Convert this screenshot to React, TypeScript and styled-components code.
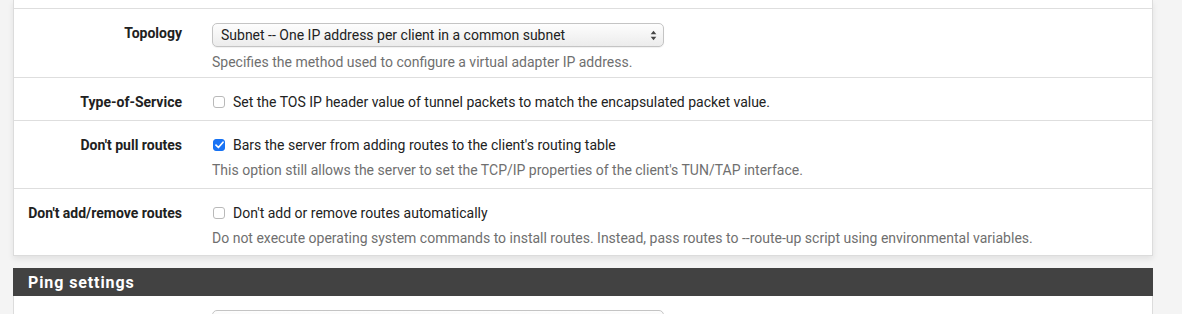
import React from "react";
import styled, { createGlobalStyle } from "styled-components";

const Global = createGlobalStyle`
  html, body { margin: 0; padding: 0; background: #f4f4f4; }
  body { font-family: Roboto, "Liberation Sans", Arial, sans-serif; color: #212121; -webkit-font-smoothing: antialiased; }
`;

const Page = styled.div`
  width: 1182px;
  height: 314px;
  overflow: hidden;
  padding: 0 29px 0 13px;
  box-sizing: border-box;
  display: flex;
  flex-direction: column;
  & > * { flex: none; }
`;

const Panel = styled.div`
  background: #fff;
  border: 1px solid #dcdcdc;
  border-top: none;
  box-shadow: 0 3px 6px rgba(0, 0, 0, 0.08);
`;

const Row = styled.div<{ $h: number; $first?: boolean }>`
  display: flex;
  box-sizing: border-box;
  height: ${(p) => p.$h}px;
  border-top: ${(p) => (p.$first ? "none" : "1px solid #dedede")};
  padding-top: ${(p) => (p.$first ? 0 : 14)}px;
`;

const Label = styled.div`
  width: 168px;
  flex: none;
  text-align: right;
  font-weight: 700;
  font-size: 14px;
  line-height: 20px;
  color: #212121;
`;

const Field = styled.div`
  margin-left: 30px;
  display: flex;
  flex-direction: column;
  align-items: flex-start;
`;

const Select = styled.div<{ $w: number }>`
  box-sizing: border-box;
  width: ${(p) => p.$w}px;
  height: 24px;
  border: 1px solid #c4c4c4;
  border-radius: 5px;
  background: linear-gradient(#fdfdfd, #ececec);
  box-shadow: 0 1px 1px rgba(0, 0, 0, 0.06);
  display: flex;
  align-items: center;
  justify-content: space-between;
  padding: 0 6px 0 8px;
  font-size: 14px;
  color: #222;
`;

const Help = styled.div`
  margin-top: 5px;
  font-size: 14px;
  line-height: 20px;
  color: #6f6f6f;
`;

const CheckLine = styled.label`
  display: flex;
  align-items: center;
  height: 20px;
  font-size: 14px;
  color: #222;
  margin-left: 1px;
`;

const Box = styled.span<{ $on?: boolean }>`
  box-sizing: border-box;
  width: 12px;
  height: 12px;
  border-radius: 3px;
  margin-right: 8px;
  border: 1px solid ${(p) => (p.$on ? "#1672f3" : "#b9b9b9")};
  background: ${(p) => (p.$on ? "#1a73f5" : "#fff")};
  display: inline-flex;
  align-items: center;
  justify-content: center;
`;

const SectionHead = styled.div`
  margin-top: 12px;
  height: 28px;
  background: #424242;
  color: #fff;
  font-size: 16px;
  font-weight: 700;
  letter-spacing: 0.9px;
  display: flex;
  align-items: center;
  padding-left: 15px;
`;

const SectionBody = styled.div`
  background: #fff;
  border: 1px solid #dcdcdc;
  border-top: none;
  height: 40px;
  padding: 14px 0 0 198px;
  box-sizing: border-box;
`;

const Arrows = () => (
  <svg width="7" height="11" viewBox="0 0 7 11">
    <path d="M3.5 0.8 L6.3 4.2 H0.7 Z" fill="#444" />
    <path d="M3.5 10.2 L6.3 6.8 H0.7 Z" fill="#444" />
  </svg>
);

const Check = () => (
  <svg width="9" height="8" viewBox="0 0 9 8">
    <path d="M1 4.2 L3.4 6.5 L8 1.2" fill="none" stroke="#fff" strokeWidth="1.7" strokeLinecap="round" strokeLinejoin="round" />
  </svg>
);

export default function App() {
  return (
    <>
      <Global />
      <Page>
        <Panel>
          <Row $h={8} $first />
          <Row $h={69}>
            <Label>Topology</Label>
            <Field>
              <Select $w={452}>
                <span>Subnet -- One IP address per client in a common subnet</span>
                <Arrows />
              </Select>
              <Help>Specifies the method used to configure a virtual adapter IP address.</Help>
            </Field>
          </Row>
          <Row $h={43}>
            <Label>Type-of-Service</Label>
            <Field>
              <CheckLine>
                <Box />
                Set the TOS IP header value of tunnel packets to match the encapsulated packet value.
              </CheckLine>
            </Field>
          </Row>
          <Row $h={68}>
            <Label>Don't pull routes</Label>
            <Field>
              <CheckLine>
                <Box $on>
                  <Check />
                </Box>
                Bars the server from adding routes to the client's routing table
              </CheckLine>
              <Help>This option still allows the server to set the TCP/IP properties of the client's TUN/TAP interface.</Help>
            </Field>
          </Row>
          <Row $h={67}>
            <Label>Don't add/remove routes</Label>
            <Field>
              <CheckLine>
                <Box />
                Don't add or remove routes automatically
              </CheckLine>
              <Help>
                Do not execute operating system commands to install routes. Instead, pass routes to --route-up script using environmental variables.
              </Help>
            </Field>
          </Row>
        </Panel>
        <SectionHead>Ping settings</SectionHead>
        <SectionBody>
          <Select $w={452} />
        </SectionBody>
      </Page>
    </>
  );
}
